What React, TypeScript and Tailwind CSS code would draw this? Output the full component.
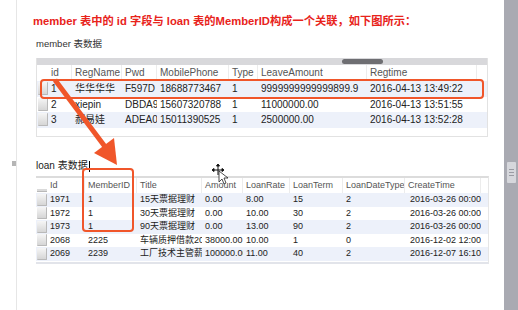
import React from "react";

const F = { fontFamily: '"Liberation Sans", "Noto Sans CJK SC", sans-serif' };

const memberCols = "grid-cols-[11px_24px_50px_35px_72px_29px_109px_110px_12px]";
const loanCols = "grid-cols-[11px_38px_52px_65px_41px_47px_53px_62px_76px_8px]";

const memberHead = ["id", "RegName", "Pwd", "MobilePhone", "Type", "LeaveAmount", "Regtime"];
const memberRows = [
  ["1", "华华华华", "F597D", "18688773467", "1", "9999999999999899.9", "2016-04-13 13:49:22"],
  ["2", "xiepin", "DBDA9", "15607320788", "1", "11000000.00", "2016-04-13 13:51:55"],
  ["3", "郝易娃", "ADEA0", "15011390525", "1", "2500000.00", "2016-04-13 13:52:28"],
];

const loanHead = ["Id", "MemberID", "Title", "Amount", "LoanRate", "LoanTerm", "LoanDateType", "CreateTime"];
const loanRows = [
  ["1971", "1", "15天票据理财", "0.00", "8.00", "15", "2", "2016-03-26 00:00"],
  ["1972", "1", "30天票据理财", "0.00", "10.00", "30", "2", "2016-03-26 00:00"],
  ["1973", "1", "90天票据理财", "0.00", "13.00", "90", "2", "2016-03-26 00:00"],
  ["2068", "2225", "车辆质押借款2016", "38000.00", "10.00", "1", "0", "2016-12-02 12:00"],
  ["2069", "2239", "工厂技术主管薪资贷", "100000.00", "11.00", "40", "2", "2016-12-07 16:10"],
];

function RowBtn({ h }: { h: string }) {
  return (
    <div className="flex items-center pl-[1px]">
      <div className={`w-[10px] ${h} bg-gradient-to-b from-[#f6f6f6] to-[#d6d6d6] border-r border-b border-[#b9b9b9] rounded-[1px]`} />
    </div>
  );
}

export default function App() {
  return (
    <div className="w-[518px] h-[310px] bg-white flex overflow-hidden relative" style={F}>
      {/* left gutter */}
      <div className="w-[16px] h-full relative">
        <div className="absolute left-[12px] top-[161px] w-[4px] h-[5px] bg-[#b5b5b5]" />
      </div>
      {/* content */}
      <div className="w-[488px] h-full border-l border-[#e6e6e6] pl-[16px] pt-[14px] flex flex-col">
        <div className="text-[11.25px] leading-[14px] font-bold text-[#e8231b] whitespace-nowrap">
          member 表中的 id 字段与 loan 表的MemberID构成一个关联，如下图所示：
        </div>
        <div className="mt-[10px] ml-[3px] text-[9.5px] leading-[12px] text-[#333]">member 表数据</div>

        {/* member table */}
        <div className="mt-[8px] ml-[3px] w-[452px] h-[79px] border border-[#e2e2e2] border-t-0 flex flex-col">
          <div className="h-[7px] bg-[#d8d8db] relative">
            <div className="absolute left-[305px] top-[1px] w-[41px] h-[5px] rounded-full bg-[#6e6e72]" />
          </div>
          <div className={`grid ${memberCols} h-[16px] text-[10px] leading-[16px] text-[#555]`}>
            <div />
            {memberHead.map((h) => (
              <div key={h} className="pl-[3px] border-r border-[#ececec] whitespace-nowrap overflow-hidden">{h}</div>
            ))}
            <div />
          </div>
          {memberRows.map((r, i) => (
            <div key={i} className={`grid ${memberCols} h-[15.5px] text-[10px] leading-[15.5px] text-[#222] ${i % 2 === 0 ? "bg-[#edf1fa]" : "bg-white"}`}>
              <RowBtn h="h-[13px]" />
              {r.map((c, j) => (
                <div key={j} className="pl-[3px] whitespace-nowrap overflow-hidden">{c}</div>
              ))}
              <div />
            </div>
          ))}
        </div>

        <div className="mt-[23px] ml-[3px] flex items-center h-[12px] text-[10px] leading-[12px] text-[#222]">
          <span>loan 表数据</span>
          <span className="ml-[1px] w-[1px] h-[11px] bg-black" />
        </div>

        {/* loan table */}
        <div className="mt-[4px] ml-[3px] w-[453px] h-[88px] border-t-2 border-[#dcdcdc] border-b-2 border-b-[#e2e4ea] border-r border-r-[#e6e6e6] flex flex-col">
          <div className={`grid ${loanCols} h-[15px] text-[9px] leading-[15px] text-[#555]`}>
            <div className="flex items-end pl-[1px] pb-[1px]">
              <div className="w-[10px] h-[3px] bg-[#dadada] border-b border-[#b9b9b9]" />
            </div>
            {loanHead.map((h) => (
              <div key={h} className="pl-[3px] border-r border-[#ececec] whitespace-nowrap overflow-hidden">{h}</div>
            ))}
            <div />
          </div>
          {loanRows.map((r, i) => (
            <div key={i} className={`grid ${loanCols} h-[13.5px] text-[9px] leading-[13.5px] text-[#222] ${i % 2 === 0 ? "bg-[#edf1fa]" : "bg-white"}`}>
              <RowBtn h="h-[12px]" />
              {r.map((c, j) => (
                <div key={j} className={`${j === 7 ? "pl-[5px]" : "pl-[3px]"} whitespace-nowrap overflow-hidden`}>{c}</div>
              ))}
              <div />
            </div>
          ))}
        </div>
      </div>
      {/* right scrollbar */}
      <div className="w-[14px] h-full bg-[#a9aab2] flex justify-center pt-[162px]">
        <div className="w-[9px] h-[21px] bg-[#d6d7dc] rounded-[1px] flex flex-col items-center justify-center gap-[2px]">
          <div className="w-[5px] h-[1px] bg-[#9a9ba3]" />
          <div className="w-[5px] h-[1px] bg-[#9a9ba3]" />
          <div className="w-[5px] h-[1px] bg-[#9a9ba3]" />
        </div>
      </div>

      {/* overlays */}
      <div className="absolute left-[40px] top-[79px] w-[444px] h-[20px] border-2 border-[#f0562a] rounded-[4px]" />
      <div className="absolute left-[82px] top-[168px] w-[52px] h-[64px] border-2 border-[#f0562a] rounded-[4px]" />
      <svg className="absolute left-0 top-0" width="518" height="310" viewBox="0 0 518 310">
        <line x1="55" y1="80" x2="106" y2="148" stroke="#f0562a" strokeWidth="5" />
        <polygon points="117,165 94,153 114,138" fill="#f0562a" />
        {/* move cursor */}
        <g transform="translate(218,170)" stroke="#111" strokeWidth="1" fill="none">
          <line x1="-5" y1="0" x2="5" y2="0" />
          <line x1="0" y1="-5" x2="0" y2="5" />
          <polygon points="0,-6 -1.5,-4 1.5,-4" fill="#111" />
          <polygon points="-6,0 -4,-1.5 -4,1.5" fill="#111" />
          <polygon points="6,0 4,-1.5 4,1.5" fill="#111" />
        </g>
        <polygon points="219,171 219,182 222,179 224,184 226,183 224,178 228,178" fill="#fff" stroke="#222" strokeWidth="0.8" />
      </svg>
    </div>
  );
}
